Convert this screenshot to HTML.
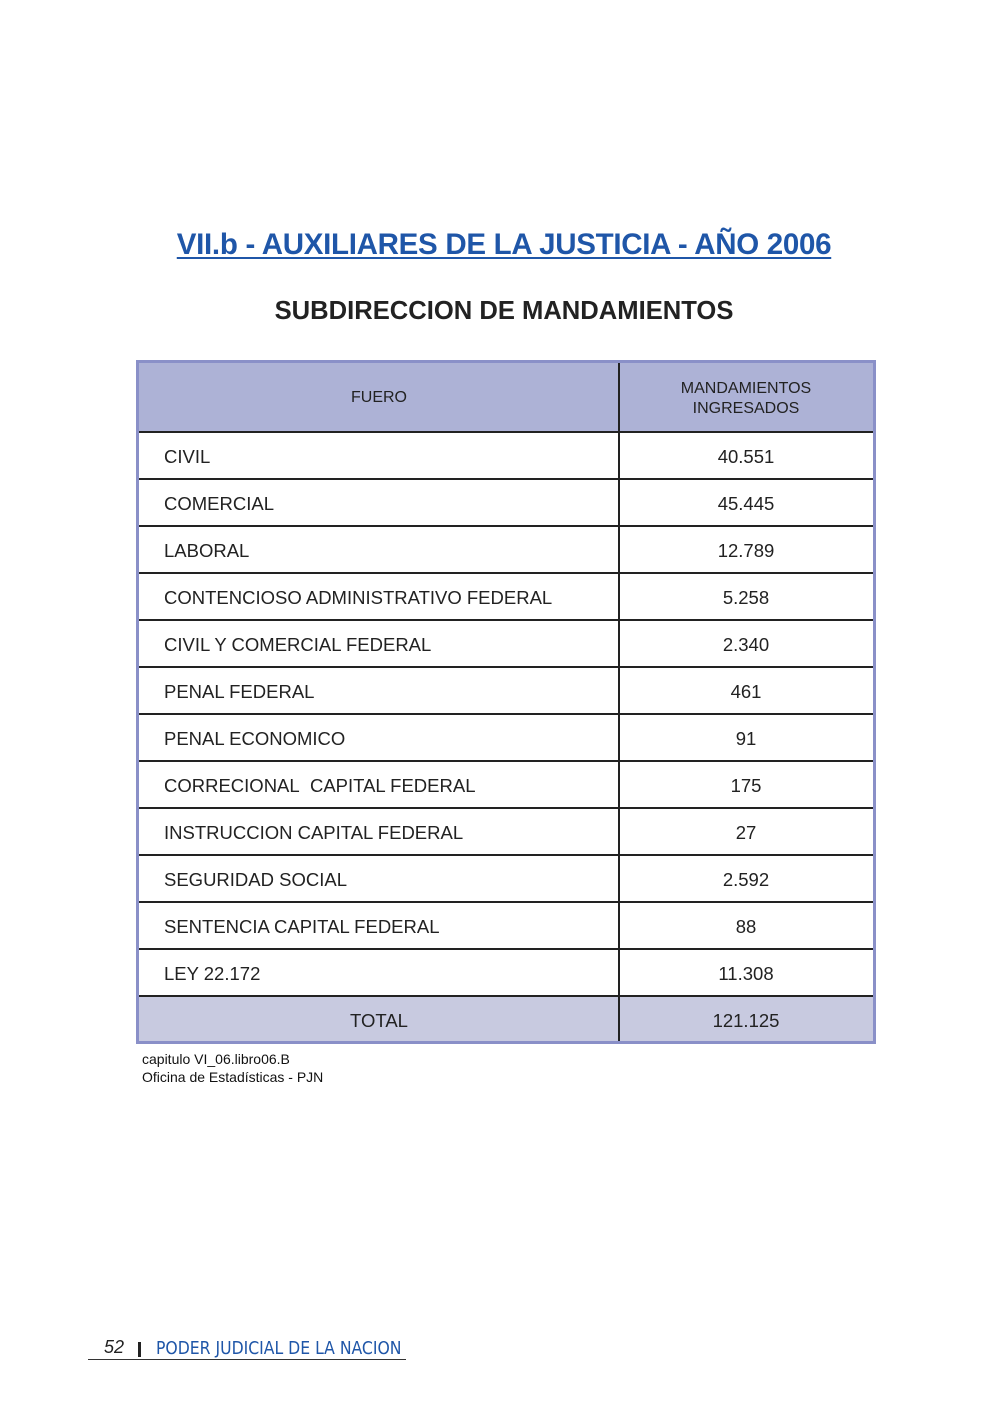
<!DOCTYPE html>
<html><head><meta charset="utf-8"><style>
body{margin:0;width:1004px;height:1417px;background:#fff;position:relative;font-family:"Liberation Sans",sans-serif;color:#222}
.a{position:absolute}
.t{left:0;width:1004px;text-align:center}
.tbl{left:136px;top:360px;width:734px;height:678px;border:3px solid #8a90c8}
.row{position:absolute;left:0;width:734px;border-top:2px solid #222;box-sizing:border-box}
.c1{position:absolute;left:25px;font-size:18.5px}
.c2{position:absolute;left:480px;width:254px;text-align:center;font-size:18.5px}
.div{position:absolute;left:479px;top:0;width:2px;height:678px;background:#222}
</style></head><body>
<div class="a t" style="top:228px;font-size:29.5px;font-weight:bold;color:#1f56a8;letter-spacing:-0.3px;padding-left:2px"><span style="text-decoration:underline;text-underline-offset:3px">VII.b - AUXILIARES DE LA JUSTICIA - AÑO 2006</span></div>
<div class="a t" style="top:297px;font-size:25.6px;font-weight:bold;color:#222;padding-left:2px">SUBDIRECCION DE MANDAMIENTOS</div>
<div class="a tbl">
<div class="row" style="top:0;height:69px;background:#adb2d6;border-top:none">
<div style="position:absolute;left:0;width:480px;top:26px;text-align:center;font-size:16px">FUERO</div>
<div style="position:absolute;left:480px;width:254px;top:16px;text-align:center;font-size:16px;line-height:20px">MANDAMIENTOS<br>INGRESADOS</div>
</div>
<div class="row" style="top:68px;height:47px"><div class="c1" style="top:13px">CIVIL</div><div class="c2" style="top:13px">40.551</div></div>
<div class="row" style="top:115px;height:47px"><div class="c1" style="top:13px">COMERCIAL</div><div class="c2" style="top:13px">45.445</div></div>
<div class="row" style="top:162px;height:47px"><div class="c1" style="top:13px">LABORAL</div><div class="c2" style="top:13px">12.789</div></div>
<div class="row" style="top:209px;height:47px"><div class="c1" style="top:13px">CONTENCIOSO ADMINISTRATIVO FEDERAL</div><div class="c2" style="top:13px">5.258</div></div>
<div class="row" style="top:256px;height:47px"><div class="c1" style="top:13px">CIVIL Y COMERCIAL FEDERAL</div><div class="c2" style="top:13px">2.340</div></div>
<div class="row" style="top:303px;height:47px"><div class="c1" style="top:13px">PENAL FEDERAL</div><div class="c2" style="top:13px">461</div></div>
<div class="row" style="top:350px;height:47px"><div class="c1" style="top:13px">PENAL ECONOMICO</div><div class="c2" style="top:13px">91</div></div>
<div class="row" style="top:397px;height:47px"><div class="c1" style="top:13px">CORRECIONAL&nbsp; CAPITAL FEDERAL</div><div class="c2" style="top:13px">175</div></div>
<div class="row" style="top:444px;height:47px"><div class="c1" style="top:13px">INSTRUCCION CAPITAL FEDERAL</div><div class="c2" style="top:13px">27</div></div>
<div class="row" style="top:491px;height:47px"><div class="c1" style="top:13px">SEGURIDAD SOCIAL</div><div class="c2" style="top:13px">2.592</div></div>
<div class="row" style="top:538px;height:47px"><div class="c1" style="top:13px">SENTENCIA CAPITAL FEDERAL</div><div class="c2" style="top:13px">88</div></div>
<div class="row" style="top:585px;height:47px"><div class="c1" style="top:13px">LEY 22.172</div><div class="c2" style="top:13px">11.308</div></div>
<div class="row" style="top:632px;height:46px;background:#c8cae0"><div style="position:absolute;left:0;width:480px;top:13px;text-align:center;font-size:18.5px">TOTAL</div><div class="c2" style="top:13px">121.125</div></div>
<div class="div"></div>
</div>
<div class="a" style="left:142px;top:1050px;font-size:14px;line-height:18px;color:#111">capitulo VI_06.libro06.B<br>Oficina de Estadísticas - PJN</div>
<div class="a" style="left:88px;top:1359px;width:318px;height:1px;background:#333"></div>
<div class="a" style="left:104px;top:1337px;font-size:18px;font-style:italic;color:#222">52</div>
<div class="a" style="left:138px;top:1342px;width:3px;height:15px;background:#222"></div>
<div class="a" style="left:156px;top:1339px;font-size:17.4px;color:#1f56a8;font-family:'DejaVu Sans Condensed','Liberation Sans',sans-serif">PODER JUDICIAL DE LA NACION</div>
</body></html>
